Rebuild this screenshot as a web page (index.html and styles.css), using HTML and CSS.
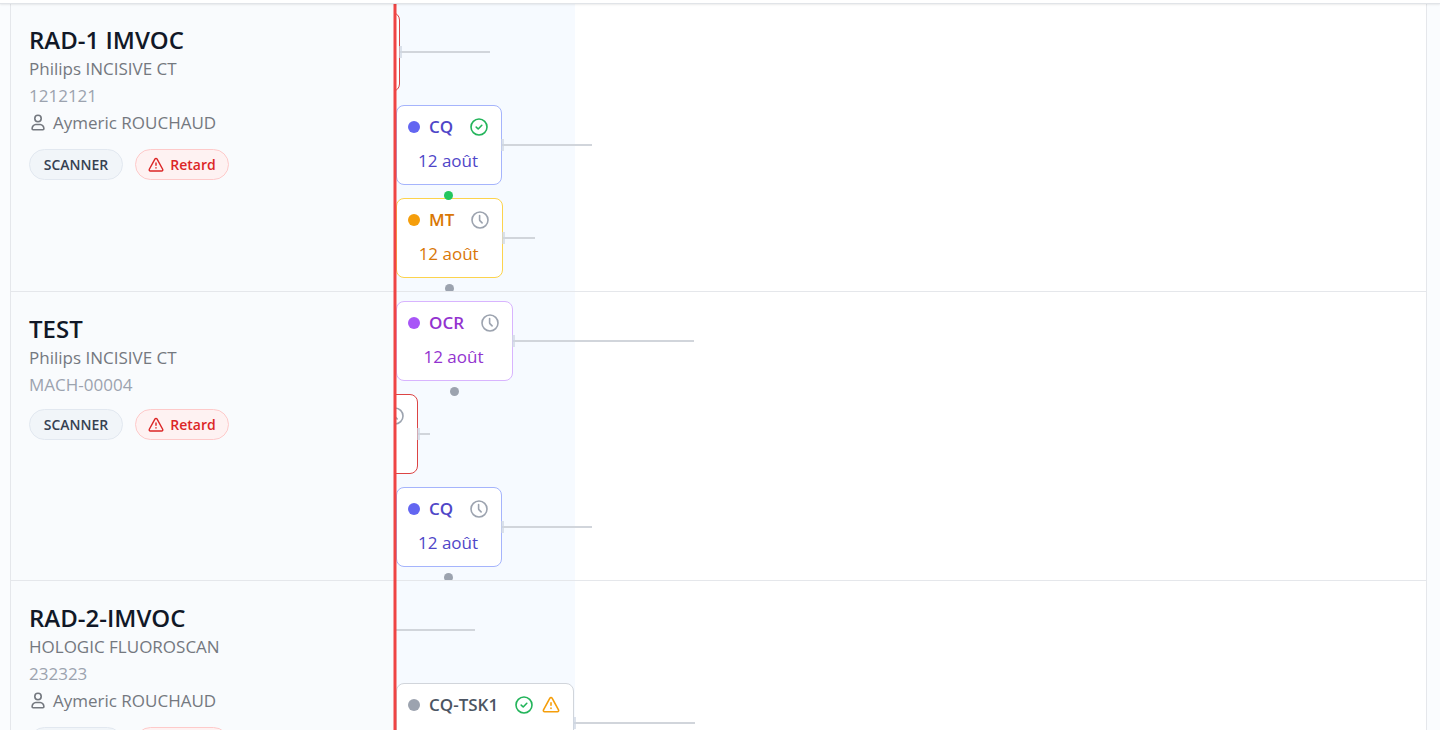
FILE: index.html
```html
<!DOCTYPE html>
<html lang="fr">
<head>
  <meta charset="UTF-8" />
  <meta name="viewport" content="width=device-width, initial-scale=1.0"/>
  <title>Planning machines</title>
  <link rel="stylesheet" href="styles.css">
</head>
<body>
  <svg class="sprite" aria-hidden="true">
    <symbol id="i-user" viewBox="0 0 18 18">
      <circle cx="9" cy="4.500" r="3.200"/>
      <path d="M6.800 10.500h4.400c2 0 3.700 2.200 3.700 4.200 0 .6-.4 1-1 1H4.100c-.6 0-1-.4-1-1 0-2 1.700-4.200 3.700-4.200z"/>
    </symbol>
    <symbol id="i-alert" viewBox="0 0 18 18">
      <path d="M7.900 2.200 1.500 13.800c-.5.900.1 1.900 1.100 1.900h12.800c1 0 1.600-1 1.100-1.900L10.100 2.200c-.5-.8-1.700-.8-2.200 0z"/>
      <path d="M9 6.800v2.400M9 12v.4"/>
    </symbol>
    <symbol id="i-check" viewBox="0 0 18 18">
      <circle cx="9" cy="9" r="8"/>
      <path d="M6.200 9.100l2 1.900 3.600-3.700"/>
    </symbol>
    <symbol id="i-clock" viewBox="0 0 18 18">
      <circle cx="9" cy="9" r="8"/>
      <path d="M8.600 4.500v4.200c0 .5.200.9.500 1.200l2 2"/>
    </symbol>
  </svg>

  <main class="page">
    <header class="topbar"></header>

    <div class="timeline">
      <section class="row">
        <div class="machine">
          <h2>RAD-1 IMVOC</h2>
          <p>Philips INCISIVE CT</p>
          <p class="serial">1212121</p>
          <p class="user"><svg class="icon"><use href="#i-user"/></svg>Aymeric ROUCHAUD</p>
          <div class="badges">
            <span class="badge">SCANNER</span>
            <span class="badge late"><svg class="icon"><use href="#i-alert"/></svg>Retard</span>
          </div>
        </div>
        <div class="track">
          <div class="lane past" style="width: 196px">
            <div class="task red"></div>
          </div>
          <div class="lane" style="width: 196px">
            <div class="task indigo">
              <div class="head"><i class="dot"></i><b>CQ</b><svg class="icon ok"><use href="#i-check"/></svg></div>
              <div class="date">12 août</div>
              <i class="link done"></i>
            </div>
          </div>
          <div class="lane" style="width: 139px">
            <div class="task amber">
              <div class="head"><i class="dot"></i><b>MT</b><svg class="icon"><use href="#i-clock"/></svg></div>
              <div class="date">12 août</div>
              <i class="link"></i>
            </div>
          </div>
        </div>
      </section>

      <section class="row">
        <div class="machine">
          <h2>TEST</h2>
          <p>Philips INCISIVE CT</p>
          <p class="serial">MACH-00004</p>
          <div class="badges">
            <span class="badge">SCANNER</span>
            <span class="badge late"><svg class="icon"><use href="#i-alert"/></svg>Retard</span>
          </div>
        </div>
        <div class="track">
          <div class="lane" style="width: 298px">
            <div class="task purple">
              <div class="head"><i class="dot"></i><b>OCR</b><svg class="icon"><use href="#i-clock"/></svg></div>
              <div class="date">12 août</div>
              <i class="link"></i>
            </div>
          </div>
          <div class="lane recent" style="width: 118px">
            <div class="task red">
              <div class="head"><i class="dot"></i><svg class="icon"><use href="#i-clock"/></svg></div>
            </div>
          </div>
          <div class="lane" style="width: 196px">
            <div class="task indigo">
              <div class="head"><i class="dot"></i><b>CQ</b><svg class="icon"><use href="#i-clock"/></svg></div>
              <div class="date">12 août</div>
              <i class="link"></i>
            </div>
          </div>
        </div>
      </section>

      <section class="row">
        <div class="machine">
          <h2>RAD-2-IMVOC</h2>
          <p>HOLOGIC FLUOROSCAN</p>
          <p class="serial">232323</p>
          <p class="user"><svg class="icon"><use href="#i-user"/></svg>Aymeric ROUCHAUD</p>
          <div class="badges">
            <span class="badge">SCANNER</span>
            <span class="badge late"><svg class="icon"><use href="#i-alert"/></svg>Retard</span>
          </div>
        </div>
        <div class="track">
          <div class="lane" style="width: 79px"></div>
          <div class="lane" style="width: 299px">
            <div class="task gray">
              <div class="head"><i class="dot"></i><b>CQ-TSK1</b><svg class="icon ok"><use href="#i-check"/></svg><svg class="icon warn"><use href="#i-alert"/></svg></div>
              <div class="date">12 août</div>
              <i class="link"></i>
            </div>
          </div>
        </div>
      </section>

      <div class="now"></div>
    </div>
  </main>
</body>
</html>
```
FILE: styles.css
```css
* {
  box-sizing: border-box;
}

body {
  margin: 0;
  font-family: 'Segoe UI', 'Open Sans', 'Noto Sans', sans-serif;
  font-size: 17px;
  line-height: 27px;
  color: #74787f;
  background: #fafcfe;
}

h2, p {
  margin: 0;
}

.sprite {
  display: none;
}

.icon {
  width: 18px;
  height: 18px;
  flex: none;
  fill: none;
  stroke: currentColor;
  stroke-width: 1.6;
  stroke-linecap: round;
  stroke-linejoin: round;
}

.page {
  height: 100vh;
  overflow-y: auto;
  scrollbar-width: none;
}

.topbar {
  position: sticky;
  top: 0;
  z-index: 5;
  height: 4px;
  background: #fff;
  border-bottom: 1px solid #e1e4e8;
  box-shadow: 0 1px 2px rgba(0, 0, 0, 0.08);
}

.timeline {
  position: relative;
  margin: -1px 13px 0 10px;
  border: solid #e5e7eb;
  border-width: 0 1px;
  background: #fff;
}

.row {
  display: flex;
  height: 289px;
  border-bottom: 1px solid #e5e7eb;
}

/* machine column */
.machine {
  flex: none;
  width: 384px;
  padding: 21px 18px;
  background: #f9fbfd;
}

.machine h2 {
  font-size: 24px;
  line-height: 31px;
  font-weight: 600;
  color: #111827;
}

.machine .serial {
  color: #9ca3af;
}

.machine .user {
  display: flex;
  align-items: center;
  gap: 6px;
  margin-bottom: 13px;
}

.badges {
  display: flex;
  gap: 12px;
  margin-top: 11px;
}

.badge {
  display: flex;
  align-items: center;
  justify-content: center;
  gap: 6px;
  min-width: 94px;
  height: 31px;
  padding: 0 12px;
  border: 1px solid #e2e8f0;
  border-radius: 16px;
  background: #f1f5f9;
  color: #374151;
  font-size: 14px;
  font-weight: 600;
}

.badge.late {
  border-color: #fecaca;
  background: #fef2f2;
  color: #dc2626;
}

.badge .icon {
  width: 16px;
  height: 16px;
}

/* lanes */
.track {
  flex: 1;
  min-width: 0;
  padding: 9px 0 0 1px;
  overflow: hidden;
  background: linear-gradient(#f6faff, #f6faff) 0 0 / 180px 100% no-repeat;
}

.lane {
  height: 80px;
  margin-bottom: 13px;
  background: linear-gradient(#d1d5db, #d1d5db) 0 center / 100% 2px no-repeat;
}

.lane.past {
  margin-left: -102px;
}

.lane.recent {
  margin-left: -84px;
}

.task {
  position: relative;
  width: fit-content;
  min-width: 106px;
  height: 80px;
  padding: 7px 13px 8px 11px;
  border: 1px solid #d1d5db;
  border-radius: 8px;
  background: #fff;
  color: #4b5563;
  text-align: center;
}

/* resize handle */
.task::after {
  content: '';
  position: absolute;
  left: 100%;
  top: 33px;
  width: 3px;
  height: 12px;
  background: #cfd5e2;
  opacity: 0.7;
}

.head {
  display: flex;
  align-items: center;
  gap: 9px;
  height: 27px;
}

.head b {
  margin-right: 8px;
  font-weight: 600;
}

.head .icon {
  color: #9ca3af;
}

.head .dot + .icon {
  margin-left: auto;
}

.head .ok {
  color: #22b45a;
}

.head .warn {
  color: #f59e0b;
}

.date {
  margin-top: 7px;
}

.dot {
  width: 12px;
  height: 12px;
  border-radius: 50%;
  background: #9ca3af;
}

.link {
  position: absolute;
  z-index: 1;
  left: 50%;
  top: 100%;
  width: 9px;
  height: 9px;
  margin: 7px 0 0 -5px;
  border-radius: 50%;
  background: #9ca3af;
}

.link.done {
  background: #22c55e;
}

.indigo {
  border-color: #a5b4fc;
  color: #4f46c8;
}

.indigo .dot {
  background: #6366f1;
}

.amber {
  border-color: #fcd34d;
  color: #d97706;
}

.amber .dot {
  background: #f59e0b;
}

.purple {
  border-color: #d8b4fe;
  color: #9333cf;
}

.purple .dot {
  background: #a855f7;
}

.red {
  border-color: #dc4444;
}

/* current date marker */
.now {
  position: absolute;
  z-index: 2;
  top: 0;
  bottom: 0;
  left: 383px;
  width: 2px;
  background: #ef4444;
  box-shadow: 0 0 0 1px rgba(239, 68, 68, 0.5);
}
```
